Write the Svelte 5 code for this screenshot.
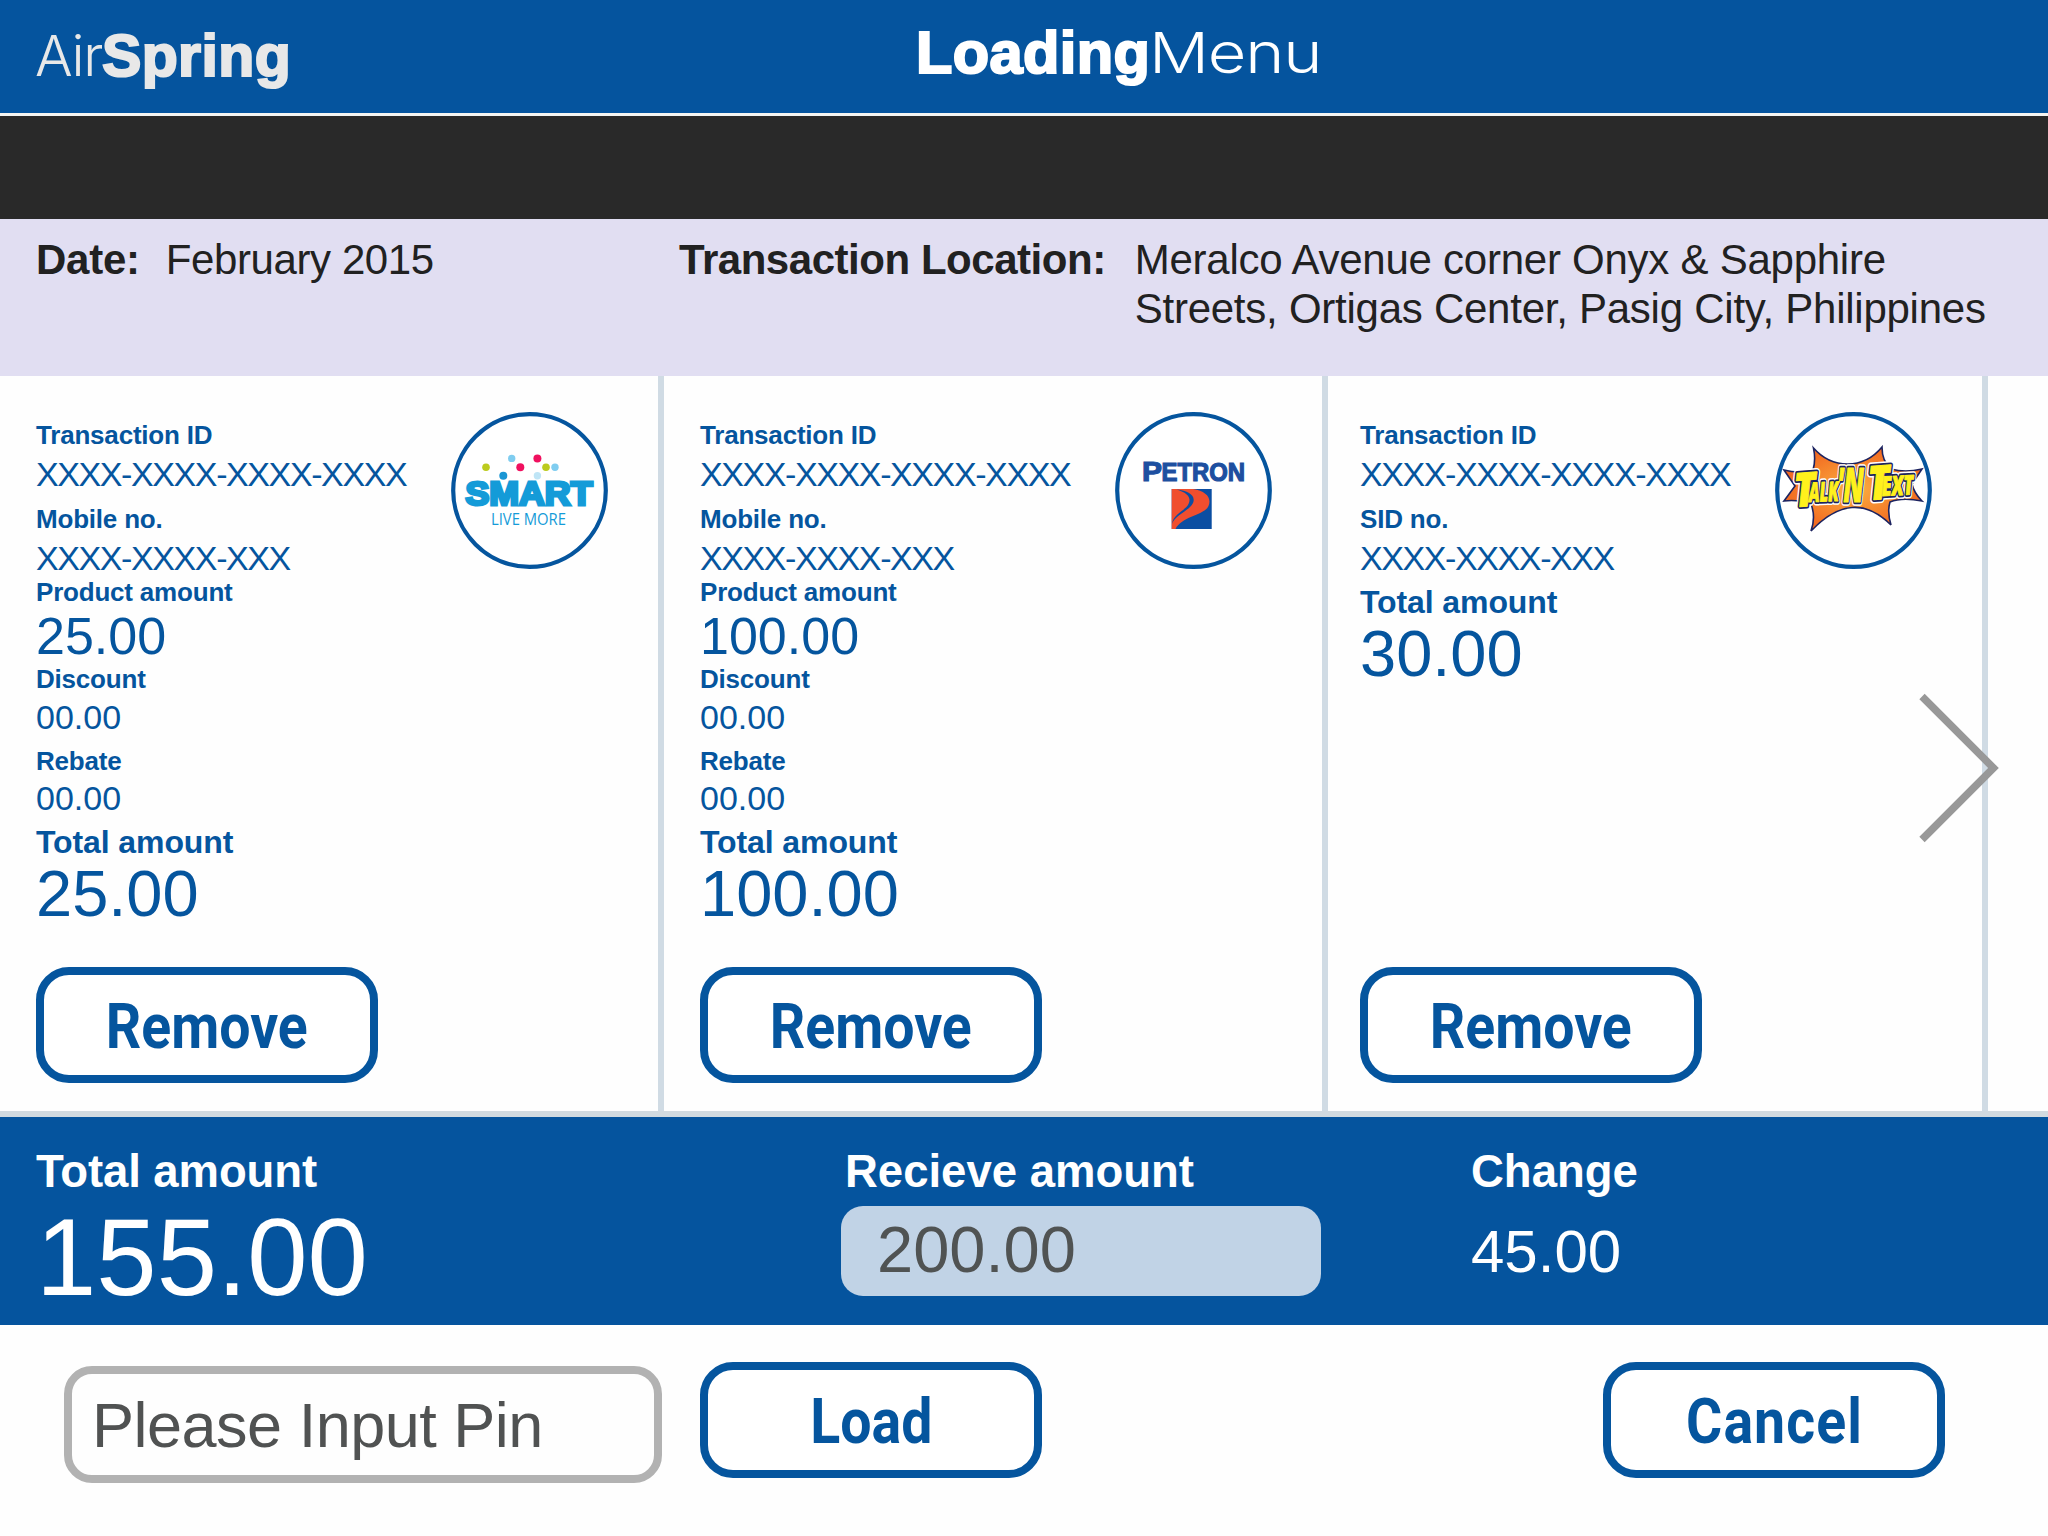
<script>
  const cards = [
    {
      brand: 'smart',
      rows: [
        { label: 'Transaction ID', value: 'XXXX-XXXX-XXXX-XXXX', kind: 'code' },
        { label: 'Mobile no.', value: 'XXXX-XXXX-XXX', kind: 'code' },
        { label: 'Product amount', value: '25.00', kind: 'product' },
        { label: 'Discount', value: '00.00', kind: 'minor' },
        { label: 'Rebate', value: '00.00', kind: 'minor' },
        { label: 'Total amount', value: '25.00', kind: 'grand' }
      ]
    },
    {
      brand: 'petron',
      rows: [
        { label: 'Transaction ID', value: 'XXXX-XXXX-XXXX-XXXX', kind: 'code' },
        { label: 'Mobile no.', value: 'XXXX-XXXX-XXX', kind: 'code' },
        { label: 'Product amount', value: '100.00', kind: 'product' },
        { label: 'Discount', value: '00.00', kind: 'minor' },
        { label: 'Rebate', value: '00.00', kind: 'minor' },
        { label: 'Total amount', value: '100.00', kind: 'grand' }
      ]
    },
    {
      brand: 'talk',
      rows: [
        { label: 'Transaction ID', value: 'XXXX-XXXX-XXXX-XXXX', kind: 'code' },
        { label: 'SID no.', value: 'XXXX-XXXX-XXX', kind: 'code' },
        { label: 'Total amount', value: '30.00', kind: 'grand' }
      ]
    }
  ];
</script>

{#snippet logo(brand)}
  <svg class="logo" viewBox="0 0 157 157" role="img" aria-label={brand}>
    <circle cx="78.5" cy="78.5" r="76.3" fill="#fff" stroke="#05559e" stroke-width="4.2" />
    {#if brand === 'smart'}
      <g>
        <circle cx="60.7" cy="46.4" r="3.7" fill="#7fcdf0" />
        <circle cx="86.4" cy="46.4" r="4" fill="#f0105f" />
        <circle cx="35" cy="55.3" r="3.8" fill="#bccb1e" />
        <circle cx="69.3" cy="55.3" r="4" fill="#f0105f" />
        <circle cx="95" cy="55.3" r="3.8" fill="#bccb1e" />
        <circle cx="104" cy="55.3" r="3.7" fill="#7fcdf0" />
        <circle cx="52.3" cy="63.7" r="4" fill="#1a96d4" />
        <circle cx="86.4" cy="63.7" r="3.7" fill="#bfe5f6" />
      </g>
      <text class="smart-name" x="14.5" y="93" textLength="127" lengthAdjust="spacingAndGlyphs">SMART</text>
      <text class="smart-tag" x="40" y="113" textLength="75" lengthAdjust="spacingAndGlyphs">LIVE MORE</text>
    {:else if brand === 'petron'}
      <text class="petron-name initial" x="27" y="68.5" textLength="20" lengthAdjust="spacingAndGlyphs">P</text>
      <text class="petron-name" x="46.5" y="68.5" textLength="83.5" lengthAdjust="spacingAndGlyphs">ETRON</text>
      <rect x="56.7" y="77" width="40" height="40" fill="#0b4ea2" />
      <path d="M56.7 77H78C91 79 97 86 93.5 94C90 103 67 104 60.5 117H56.7Z" fill="#f04e2e" />
      <path d="M61.5 77.6C73 81 76.5 86 73.5 92C70 99 58 102 57 112C60 103 74 99 78 91C81 84 74 79 61.5 77.6Z" fill="#0b4ea2" />
    {:else}
      <defs>
        <radialGradient id="burst">
          <stop offset="0" stop-color="#fbb040" />
          <stop offset="1" stop-color="#f26a21" />
        </radialGradient>
      </defs>
      <path
        d="M38.5 36C57 57 88 58 107 35C107 45 110 52 116 57Q130 61 147 57L137 72Q139 81 147 89Q127 85 115 90Q112 100 116 113Q78 75 36 119Q41 105 36 92Q22 87 9 89L20 74L9 58Q24 62 38 58Q41 48 38.5 36Z"
        fill="url(#burst)"
        stroke="#1c2360"
        stroke-width="1.6"
      />
      <g class="comic">
        {#each ['halo', 'rim', 'fill'] as layer}
          <g class={layer}>
            <text class="tall" transform="translate(20 95) rotate(-4)" textLength="22" lengthAdjust="spacingAndGlyphs">T</text>
            <text class="short" transform="translate(34 90) rotate(-2)" textLength="30" lengthAdjust="spacingAndGlyphs">ALK</text>
            <text class="tall" transform="translate(62 90)" textLength="27" lengthAdjust="spacingAndGlyphs">'N</text>
            <text class="tall" transform="translate(94 88) rotate(-4)" textLength="22" lengthAdjust="spacingAndGlyphs">T</text>
            <text class="short" transform="translate(107 84) rotate(-3)" textLength="32" lengthAdjust="spacingAndGlyphs">EXT</text>
          </g>
        {/each}
      </g>
    {/if}
  </svg>
{/snippet}

<div class="screen">
  <header>
    <div class="brand"><span class="thin">Air</span><b>Spring</b></div>
    <h1><b>Loading</b><span class="thin">Menu</span></h1>
  </header>
  <div class="strip"></div>

  <section class="info">
    <div class="date"><b>Date:</b><span>February 2015</span></div>
    <div class="place">
      <b>Transaction Location:</b>
      <p>Meralco Avenue corner Onyx &amp; Sapphire<br />Streets, Ortigas Center, Pasig City, Philippines</p>
    </div>
  </section>

  <section class="cards">
    {#each cards as card}
      <article class:last={card === cards.at(-1)}>
        <dl>
          {#each card.rows as row}
            <div class={row.kind}>
              <dt>{row.label}</dt>
              <dd>{row.value}</dd>
            </div>
          {/each}
        </dl>
        {@render logo(card.brand)}
        <button class="action"><span>Remove</span></button>
      </article>
    {/each}
    <svg class="next" viewBox="0 0 80 150" aria-label="Next">
      <path d="M3 3.5L74.500 75L3 146.500" fill="none" stroke="#989898" stroke-width="7.5" />
    </svg>
  </section>

  <section class="summary">
    <div class="sum total"><b>Total amount</b><span>155.00</span></div>
    <div class="sum received"><b>Recieve amount</b><span>200.00</span></div>
    <div class="sum change"><b>Change</b><span>45.00</span></div>
  </section>

  <footer>
    <div class="pin">Please Input Pin</div>
    <button class="action load"><span>Load</span></button>
    <button class="action cancel"><span>Cancel</span></button>
  </footer>
</div>

<style>
  :global(body) {
    margin: 0;
    background: #fff;
  }
  .screen {
    width: 2048px;
    height: 1536px;
    display: flex;
    flex-direction: column;
    overflow: hidden;
    background: #fefefe;
    font-family: 'Liberation Sans', Arial, sans-serif;
    line-height: 1;
    color: #05559e;
    white-space: nowrap;
  }
  header {
    box-sizing: border-box;
    height: 116px;
    display: grid;
    grid-template-columns: 916px auto;
    align-items: start;
    background: #05549e;
    border-bottom: 3px solid #f4f4f2;
    color: #fff;
    font-size: 59px;
  }
  .brand {
    padding: 27px 0 0 35px;
    color: #e8e8e8;
  }
  h1 {
    margin: 0;
    padding-top: 23px;
    font-size: 59.500px;
    font-weight: 400;
  }
  header b {
    letter-spacing: 0.4px;
    -webkit-text-stroke: 2.2px currentColor;
  }
  .thin {
    display: inline-block;
    font-family: Inter, 'Liberation Sans', sans-serif;
    font-weight: 300;
    font-size: 56px;
    line-height: 1;
  }
  .brand .thin {
    letter-spacing: -1.4px;
  }
  h1 .thin {
    margin-left: -1px;
    letter-spacing: -1px;
    transform: scaleX(1.19);
    transform-origin: left;
  }
  .strip {
    height: 103px;
    background: #292929;
  }
  .info {
    box-sizing: border-box;
    height: 157px;
    padding-top: 16px;
    display: grid;
    grid-template-columns: 679px auto;
    background: #e1def2;
    color: #212121;
    font-size: 42px;
    line-height: 49px;
    letter-spacing: -0.25px;
  }
  .date {
    padding-left: 36px;
    display: flex;
    gap: 26px;
  }
  .date span {
    letter-spacing: -0.4px;
  }
  .place {
    display: flex;
    gap: 29px;
  }
  .place b {
    letter-spacing: -0.46px;
  }
  .place p {
    margin: 0;
  }
  .cards {
    box-sizing: border-box;
    position: relative;
    height: 741px;
    display: grid;
    grid-template-columns: 664px 664px 660px 60px;
    grid-template-rows: 735px;
    border-bottom: 6px solid #d1dae0;
  }
  article {
    box-sizing: border-box;
    display: grid;
    grid-template-columns: 415px 157px;
    grid-template-rows: 555px 116px;
    padding: 36px 0 28px 36px;
    border-right: 6px solid #d0dbe4;
  }
  article.last {
    padding-left: 32px;
  }
  dl {
    margin: 10px 0 0;
  }
  dt {
    font-size: 26px;
    font-weight: 700;
    letter-spacing: -0.2px;
  }
  dd {
    margin: 0;
    font-size: 34px;
  }
  .code {
    margin-bottom: 15px;
  }
  .code dd {
    padding-top: 9px;
    letter-spacing: -1.4px;
  }
  .product {
    margin-top: -11px;
    margin-bottom: 4px;
  }
  .product dd {
    padding-top: 5px;
    font-size: 52px;
  }
  .minor {
    margin-bottom: 14px;
  }
  .minor dd {
    padding-top: 7.5px;
  }
  .grand {
    margin-top: -4px;
  }
  .minor + .grand {
    margin-top: -3.5px;
  }
  .grand dt {
    font-size: 32px;
    letter-spacing: -0.1px;
  }
  .grand dd {
    padding-top: 3px;
    font-size: 65px;
  }
  .logo {
    width: 157px;
    height: 157px;
  }
  .smart-name {
    font: 700 34px 'Liberation Sans', sans-serif;
    fill: #149bd8;
    stroke: #149bd8;
    stroke-width: 3;
  }
  .smart-tag {
    font: 500 15.500px 'Open Sans', sans-serif;
    fill: #149bd8;
  }
  .petron-name {
    font: 700 25px 'Liberation Sans', sans-serif;
    fill: #1d4fa0;
    stroke: #1d4fa0;
    stroke-width: 1.2;
  }
  .petron-name.initial {
    font-size: 28px;
  }
  .comic text {
    font-family: 'Open Sans', sans-serif;
    font-weight: 800;
    font-style: italic;
    stroke-linejoin: round;
  }
  .comic .tall {
    font-size: 47px;
  }
  .comic .short {
    font-size: 27px;
  }
  .halo {
    fill: #fff;
    stroke: #fff;
    stroke-width: 7.5;
  }
  .rim {
    fill: #1c2360;
    stroke: #1c2360;
    stroke-width: 4.5;
  }
  .fill {
    fill: #fff11c;
    stroke: #fff11c;
    stroke-width: 1;
  }
  .action {
    box-sizing: border-box;
    width: 342px;
    height: 116px;
    padding: 2px 0 0;
    border: 8px solid #05559e;
    border-radius: 33px;
    background: #fff;
    color: #05559e;
    font: 700 63px/1 Roboto, sans-serif;
  }
  .action span {
    display: inline-block;
    transform: scaleX(0.88);
  }
  .next {
    position: absolute;
    left: 1919px;
    top: 317px;
    width: 80px;
    height: 150px;
  }
  .summary {
    height: 208px;
    display: grid;
    grid-template-columns: 841px 630px auto;
    background: #05549e;
    color: #fff;
  }
  .sum {
    display: flex;
    flex-direction: column;
    align-items: flex-start;
    padding-top: 32px;
  }
  .sum b {
    font-size: 45.500px;
  }
  .total {
    padding-left: 36px;
  }
  .total b {
    letter-spacing: -0.1px;
  }
  .total span {
    margin-top: 9px;
    font-size: 108.500px;
  }
  .received b {
    margin-left: 4px;
  }
  .received span {
    box-sizing: border-box;
    width: 480px;
    height: 90px;
    margin-top: 11.5px;
    padding: 11px 0 0 36px;
    border-radius: 22px;
    background: #c1d3e6;
    color: #505353;
    font-size: 65px;
  }
  .change span {
    margin-top: 27px;
    font-size: 60px;
  }
  footer {
    flex: 1;
    display: flex;
    align-items: flex-start;
    padding: 37px 103px 0 64px;
  }
  .pin {
    box-sizing: border-box;
    width: 598px;
    height: 117px;
    margin-top: 4px;
    padding: 20px 0 0 20px;
    border: 8px solid #b2b2b2;
    border-radius: 28px;
    color: #505252;
    font-size: 63px;
    letter-spacing: -0.5px;
  }
  .load {
    margin-left: 38px;
  }
  .cancel {
    margin-left: auto;
    letter-spacing: 1.2px;
  }
</style>
